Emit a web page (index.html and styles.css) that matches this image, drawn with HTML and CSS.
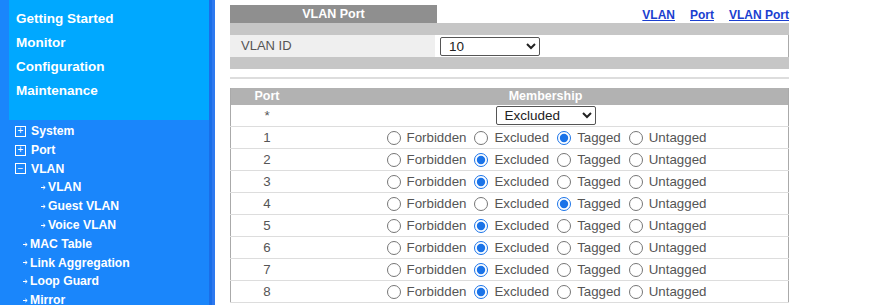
FILE: index.html
```html
<!DOCTYPE html>
<html lang="en">
<head>
  <meta charset="UTF-8">
  <title>VLAN Port</title>
  <link rel="stylesheet" href="styles.css">
</head>
<body>
<div class="layout">
  <aside class="sidebar">
    <div class="top-menu">
      <a>Getting Started</a>
      <a>Monitor</a>
      <a>Configuration</a>
      <a>Maintenance</a>
    </div>
    <ul class="tree">
      <li><span class="box">+</span>System</li>
      <li><span class="box">+</span>Port</li>
      <li><span class="box">&minus;</span>VLAN</li>
      <li class="sub"><svg class="arr" viewBox="0 0 5 5"><path d="M0 2.5H4M2.3 0.9L4.2 2.5L2.3 4.1" stroke="#fff" stroke-width="1" fill="none"/></svg>VLAN</li>
      <li class="sub"><svg class="arr" viewBox="0 0 5 5"><path d="M0 2.5H4M2.3 0.9L4.2 2.5L2.3 4.1" stroke="#fff" stroke-width="1" fill="none"/></svg>Guest VLAN</li>
      <li class="sub"><svg class="arr" viewBox="0 0 5 5"><path d="M0 2.5H4M2.3 0.9L4.2 2.5L2.3 4.1" stroke="#fff" stroke-width="1" fill="none"/></svg>Voice VLAN</li>
      <li class="leaf"><svg class="arr" viewBox="0 0 5 5"><path d="M0 2.5H4M2.3 0.9L4.2 2.5L2.3 4.1" stroke="#fff" stroke-width="1" fill="none"/></svg>MAC Table</li>
      <li class="leaf"><svg class="arr" viewBox="0 0 5 5"><path d="M0 2.5H4M2.3 0.9L4.2 2.5L2.3 4.1" stroke="#fff" stroke-width="1" fill="none"/></svg>Link Aggregation</li>
      <li class="leaf"><svg class="arr" viewBox="0 0 5 5"><path d="M0 2.5H4M2.3 0.9L4.2 2.5L2.3 4.1" stroke="#fff" stroke-width="1" fill="none"/></svg>Loop Guard</li>
      <li class="leaf"><svg class="arr" viewBox="0 0 5 5"><path d="M0 2.5H4M2.3 0.9L4.2 2.5L2.3 4.1" stroke="#fff" stroke-width="1" fill="none"/></svg>Mirror</li>
    </ul>
  </aside>

  <main class="content">
    <div class="title-row">
      <div class="tab">VLAN Port</div>
      <nav class="links">
        <a href="#">VLAN</a>
        <a href="#">Port</a>
        <a href="#">VLAN Port</a>
      </nav>
    </div>

    <div class="panel">
      <div class="bar"></div>
      <div class="field-row">
        <div class="label">VLAN ID</div>
        <div class="value">
          <select class="vlan-select"><option>10</option></select>
        </div>
      </div>
      <div class="bar"></div>
    </div>

    <div class="sep"></div>

    <table class="ports">
      <thead>
        <tr><th class="port-col">Port</th><th>Membership</th></tr>
      </thead>
      <tbody>
        <tr>
          <td class="port-col">*</td>
          <td><select class="all-select"><option>Excluded</option></select></td>
        </tr>
      </tbody>
      <tbody id="rows"></tbody>
    </table>
  </main>
</div>

<script>
  // which option is checked for each port
  const states = ['T', 'E', 'E', 'T', 'E', 'E', 'E', 'E'];
  const opts = [['F', 'Forbidden'], ['E', 'Excluded'], ['T', 'Tagged'], ['U', 'Untagged']];
  const tbody = document.getElementById('rows');

  states.forEach((s, i) => {
    const n = i + 1;
    let cells = '';
    opts.forEach(o => {
      cells += `<label><input type="radio" name="p${n}" ${o[0] === s ? 'checked' : ''}>${o[1]}</label>`;
    });
    tbody.innerHTML += `<tr><td class="port-col">${n}</td><td><div class="radios">${cells}</div></td></tr>`;
  });
</script>
</body>
</html>
```

FILE: styles.css
```css
body {
  margin: 0;
  font-family: 'Liberation Sans', Arial, sans-serif;
  background: #fff;
  color: #333;
}
.layout {
  display: grid;
  grid-template-columns: 215px 1fr;
  height: 305px;
  overflow: hidden;
}
.sidebar {
  background: #1a86fb;
  border-right: 3px solid #2d79f0;
  box-sizing: border-box;
  padding-right: 3px;
  box-shadow: inset -3px 0 0 #1a6ee8;
}
.top-menu {
  background: #00a8ff;
  margin-left: 9px;
  height: 120px;
  padding: 7px 0 0 7px;
  box-sizing: border-box;
}
.top-menu a {
  display: block;
  color: #fff;
  font-weight: bold;
  font-size: 13.5px;
  line-height: 24px;
}
.tree {
  list-style: none;
  margin: 0;
  padding: 2px 0 0 15px;
}
.tree li {
  color: #fff;
  font-weight: bold;
  font-size: 12.2px;
  line-height: 18.8px;
  display: flex;
  align-items: center;
}
.box {
  display: inline-flex;
  align-items: center;
  justify-content: center;
  width: 9px;
  height: 9px;
  border: 1px solid #fff;
  font-size: 10px;
  line-height: 1;
  margin-right: 5px;
  font-weight: normal;
}
.arr {
  width: 5px;
  height: 5px;
  margin-right: 2px;
}
.tree .sub {
  padding-left: 26px;
}
.tree .leaf {
  padding-left: 8px;
}

.content {
  padding: 5px 0 0 15px;
  width: 559px;
}
.title-row {
  display: flex;
  justify-content: space-between;
  height: 18px;
}
.tab {
  width: 207px;
  background: #8f8f8f;
  color: #fff;
  font-weight: bold;
  font-size: 12.5px;
  text-align: center;
  line-height: 18px;
}
.links {
  display: flex;
  gap: 15px;
  align-items: flex-end;
  padding-bottom: 1px;
}
.links a {
  color: #1a3ecf;
  font-weight: bold;
  font-size: 12px;
}
.panel .bar {
  height: 12px;
  background: #c6c6c6;
}
.field-row {
  display: flex;
  height: 22px;
  border-right: 1px solid #aaa;
}
.label {
  width: 194px;
  background: #efefef;
  font-size: 13px;
  line-height: 22px;
  padding-left: 11px;
  color: #555;
}
.value {
  padding-left: 5px;
  display: flex;
  align-items: center;
}
select {
  font-family: inherit;
  font-size: 13.5px;
  color: #222;
  background: #fff;
  border: 1px solid #555;
  border-radius: 2px;
  height: 19px;
  padding: 0 4px;
}
.vlan-select {
  width: 100px;
}
.all-select {
  width: 100px;
}
.sep {
  height: 2px;
  background: #ddd;
  margin-top: 8px;
}
.ports {
  margin-top: 9px;
  width: 559px;
  border-collapse: collapse;
  border-left: 1px solid #aaa;
  border-right: 1px solid #aaa;
  font-size: 13.3px;
}
.ports th {
  background: #b2b2b2;
  color: #fff;
  font-size: 12.5px;
  height: 17px;
  padding: 0;
  line-height: 17px;
}
.ports td {
  height: 21px;
  padding: 0;
  border-bottom: 1px solid #ddd;
  text-align: center;
  color: #555;
}
.port-col {
  width: 72px;
}
.radios {
  display: flex;
  justify-content: center;
  gap: 8px;
  padding-left: 2px;
}
.radios label {
  display: flex;
  align-items: center;
  gap: 6px;
}
.radios input {
  margin: 0;
  width: 14px;
  height: 14px;
  accent-color: #1a73e8;
}
```
